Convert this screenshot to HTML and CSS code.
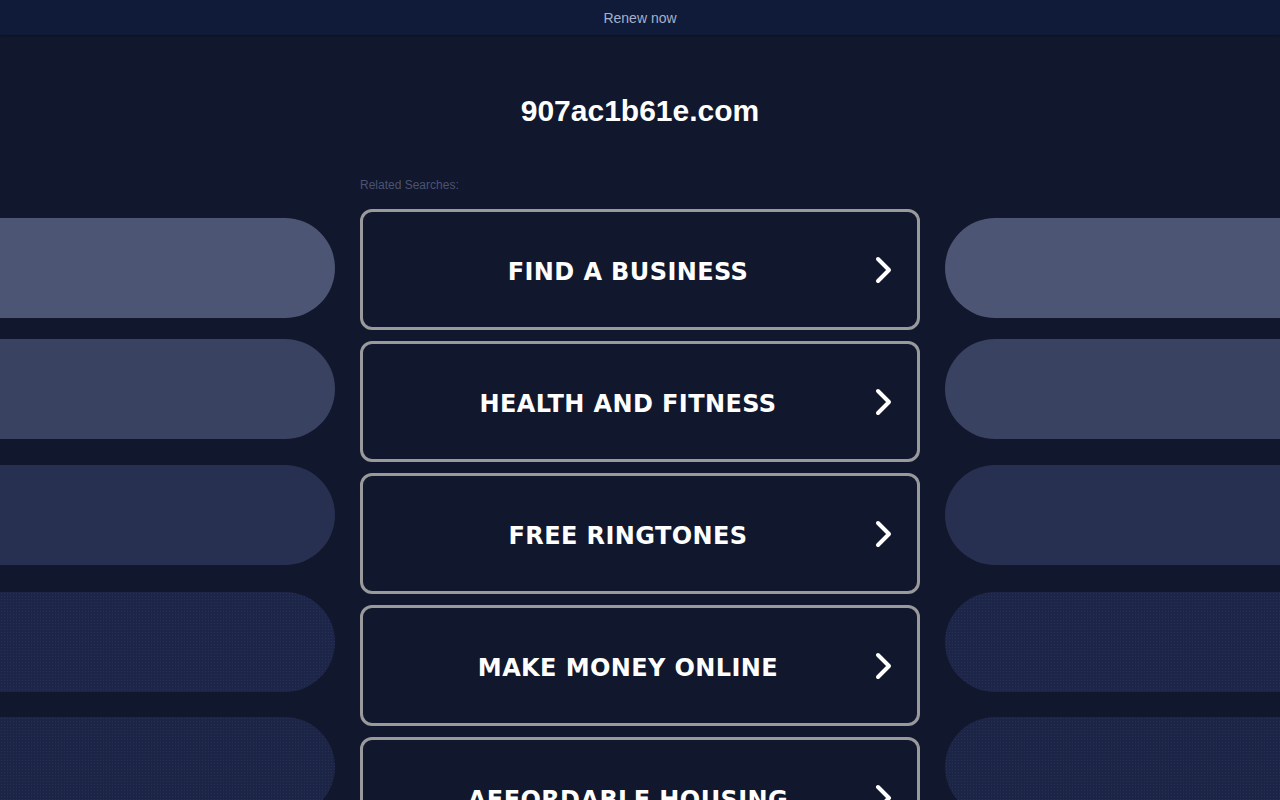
FILE: index.html
```html
<!DOCTYPE html>
<html>
<head>
<meta charset="utf-8">
<title>907ac1b61e.com</title>
<link rel="stylesheet" href="styles.css">
</head>
<body>
<div class="topbar"><a class="renew" href="#">Renew now</a></div>
<h1 class="domain">907ac1b61e.com</h1>
<div class="main">
  <div class="side side-left">
    <div class="pill p1"></div>
    <div class="pill p2"></div>
    <div class="pill p3"></div>
    <div class="pill p4"></div>
    <div class="pill p5"></div>
  </div>
  <div class="center">
    <div class="related">Related Searches:</div>
    <a class="btn" href="#"><span class="label">FIND A BUSINESS</span><svg class="arrow" viewBox="0 0 20 28"><path d="M5 3 L16 14 L5 25" fill="none" stroke="#fff" stroke-width="4" stroke-linecap="round" stroke-linejoin="round"/></svg></a>
    <a class="btn" href="#"><span class="label">HEALTH AND FITNESS</span><svg class="arrow" viewBox="0 0 20 28"><path d="M5 3 L16 14 L5 25" fill="none" stroke="#fff" stroke-width="4" stroke-linecap="round" stroke-linejoin="round"/></svg></a>
    <a class="btn" href="#"><span class="label">FREE RINGTONES</span><svg class="arrow" viewBox="0 0 20 28"><path d="M5 3 L16 14 L5 25" fill="none" stroke="#fff" stroke-width="4" stroke-linecap="round" stroke-linejoin="round"/></svg></a>
    <a class="btn" href="#"><span class="label">MAKE MONEY ONLINE</span><svg class="arrow" viewBox="0 0 20 28"><path d="M5 3 L16 14 L5 25" fill="none" stroke="#fff" stroke-width="4" stroke-linecap="round" stroke-linejoin="round"/></svg></a>
    <a class="btn" href="#"><span class="label">AFFORDABLE HOUSING</span><svg class="arrow" viewBox="0 0 20 28"><path d="M5 3 L16 14 L5 25" fill="none" stroke="#fff" stroke-width="4" stroke-linecap="round" stroke-linejoin="round"/></svg></a>
  </div>
  <div class="side side-right">
    <div class="pill p1"></div>
    <div class="pill p2"></div>
    <div class="pill p3"></div>
    <div class="pill p4"></div>
    <div class="pill p5"></div>
  </div>
</div>
</body>
</html>
```
FILE: styles.css
```css
html, body {
  margin: 0;
  padding: 0;
  background: #11172c;
  overflow: hidden;
  height: 800px;
}
body {
  font-family: "Liberation Sans", Arial, sans-serif;
}
.topbar {
  height: 35px;
  background: #101b39;
  display: flex;
  align-items: center;
  justify-content: center;
  box-shadow: 0 1px 2px rgba(0,0,0,0.25);
}
.renew {
  color: #a3b1cc;
  font-size: 14px;
  text-decoration: none;
}
.domain {
  margin: 58px 0 0;
  height: 36px;
  line-height: 36px;
  text-align: center;
  color: #ffffff;
  font-size: 30px;
  font-weight: bold;
}
.main {
  display: flex;
  margin-top: 48px;
}
.side {
  flex: 1;
  display: flex;
  flex-direction: column;
  padding-top: 41px;
}
.side-left {
  align-items: flex-end;
  margin-right: 25px;
}
.side-right {
  align-items: flex-start;
  margin-left: 25px;
}
.pill {
  width: 100%;
  height: 100px;
  flex: none;
}
.side-left .pill {
  border-radius: 0 50px 50px 0;
}
.side-right .pill {
  border-radius: 50px 0 0 50px;
}
.p1 { background: #4c5573; }
.p2 { background: #3a4261; margin-top: 21px; }
.p3 { background: #283052; margin-top: 26px; }
.p4 {
  background-color: #1d2648;
  background-image: radial-gradient(rgba(60,75,120,0.3) 0.6px, transparent 0.8px);
  background-size: 3px 3px;
  margin-top: 27px;
}
.p5 {
  background-color: #1c2546;
  background-image: radial-gradient(rgba(60,75,120,0.3) 0.6px, transparent 0.8px);
  background-size: 3px 3px;
  margin-top: 25px;
}
.center {
  width: 560px;
  flex: none;
}
.related {
  color: #4a5472;
  font-size: 12px;
  height: 16px;
  line-height: 16px;
  margin-bottom: 16px;
}
.btn {
  position: relative;
  display: flex;
  align-items: center;
  justify-content: center;
  box-sizing: border-box;
  height: 121px;
  margin-bottom: 11px;
  border: 3px solid #9a9a9c;
  border-radius: 12px;
  background: #11172c;
  text-decoration: none;
}
.label {
  color: #ffffff;
  font-family: "DejaVu Sans", Verdana, sans-serif;
  font-weight: bold;
  font-size: 24px;
  letter-spacing: 0.4px;
  padding-right: 24px;
  margin-top: 4px;
}
.arrow {
  position: absolute;
  right: 24px;
  top: 44px;
  width: 20px;
  height: 28px;
}
```
